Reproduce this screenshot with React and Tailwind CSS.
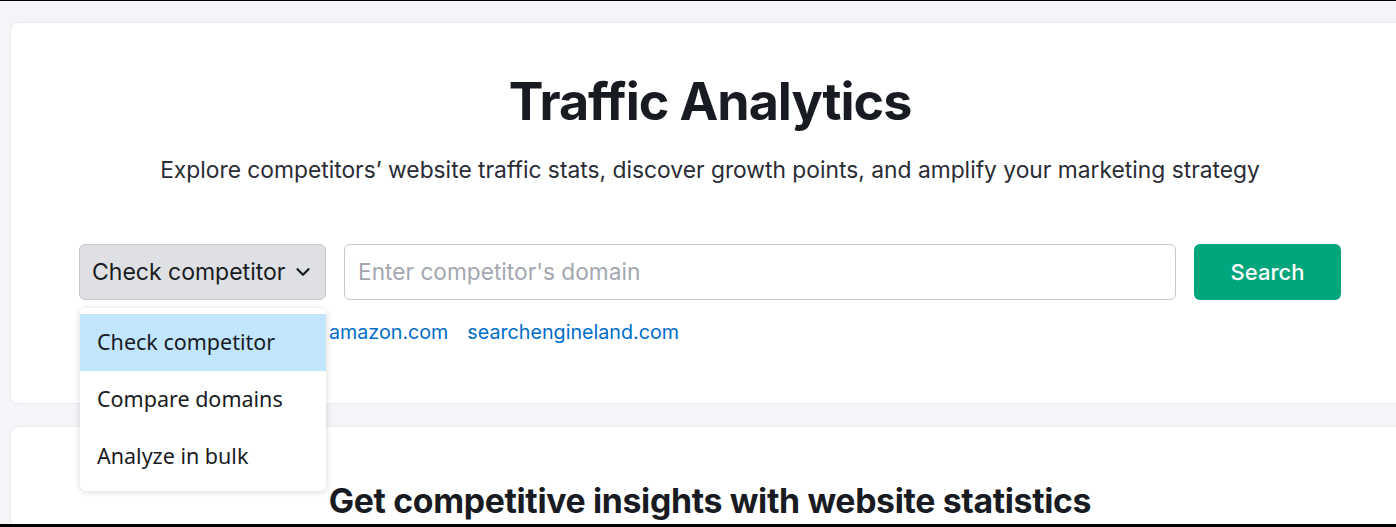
import React from "react";
import { ChevronDown } from "lucide-react";

export default function App() {
  return (
    <div className="relative h-[527px] w-[1396px] overflow-hidden border-t border-b-[3px] border-black bg-[#f4f5f9] font-['Inter',sans-serif] text-[#191b23]">
      <div className="flex flex-col gap-[22px] pl-[10px] pt-[21px]">
        <div className="relative flex h-[382px] w-[1400px] shrink-0 flex-col items-center rounded-lg border border-[#e9eaee] bg-white">
          <h1 className="mt-[47px] text-[52px] font-bold leading-[64px] tracking-[-0.02em]">
            Traffic Analytics
          </h1>
          <p className="mt-[22px] text-[22.8px] leading-[28px] text-[#2a2c35]">
            Explore competitors’ website traffic stats, discover growth points, and amplify your marketing strategy
          </p>
          <div className="mt-[60px] flex w-[1262px] flex-col">
            <div className="flex h-[56px] gap-[18px]">
              <div className="relative w-[247px] shrink-0">
                <button className="flex h-full w-full items-center justify-between rounded-md border border-[#c6c9d1] bg-[#dfe0e4] pl-[12px] pr-[11px] text-[23px] text-[#191b23]">
                  <span>Check competitor</span>
                  <ChevronDown size={22} strokeWidth={2.5} />
                </button>
                <div className="absolute left-[1px] top-[64px] z-10 w-[246px] rounded-md bg-white py-[6px] shadow-[0_1px_6px_rgba(25,27,35,0.18)] font-['Noto_Sans',sans-serif] text-[21.5px] text-[#191b23]">
                  <div className="flex h-[57px] items-center bg-[#c2e5fe] px-[17px]">Check competitor</div>
                  <div className="flex h-[57px] items-center px-[17px]">Compare domains</div>
                  <div className="flex h-[57px] items-center px-[17px]">Analyze in bulk</div>
                </div>
              </div>
              <div className="flex flex-1 items-center rounded-md border border-[#c6c9d1] bg-white px-[13px] text-[22.7px] text-[#a4a7b0]">
                Enter competitor's domain
              </div>
              <button className="w-[147px] shrink-0 rounded-md bg-[#00a67b] text-[22px] font-medium text-white">
                Search
              </button>
            </div>
            <div className="mt-[20px] flex gap-[19px] pl-[250px] text-[19.7px] leading-[24px] text-[#006dca]">
              <span>amazon.com</span>
              <span>searchengineland.com</span>
            </div>
          </div>
        </div>
        <div className="flex h-[200px] w-[1400px] shrink-0 flex-col items-center rounded-lg border border-[#e9eaee] bg-white">
          <h2 className="mt-[54px] text-[33.8px] font-bold leading-[40px] tracking-[-0.01em]">
            Get competitive insights with website statistics
          </h2>
        </div>
      </div>
    </div>
  );
}
